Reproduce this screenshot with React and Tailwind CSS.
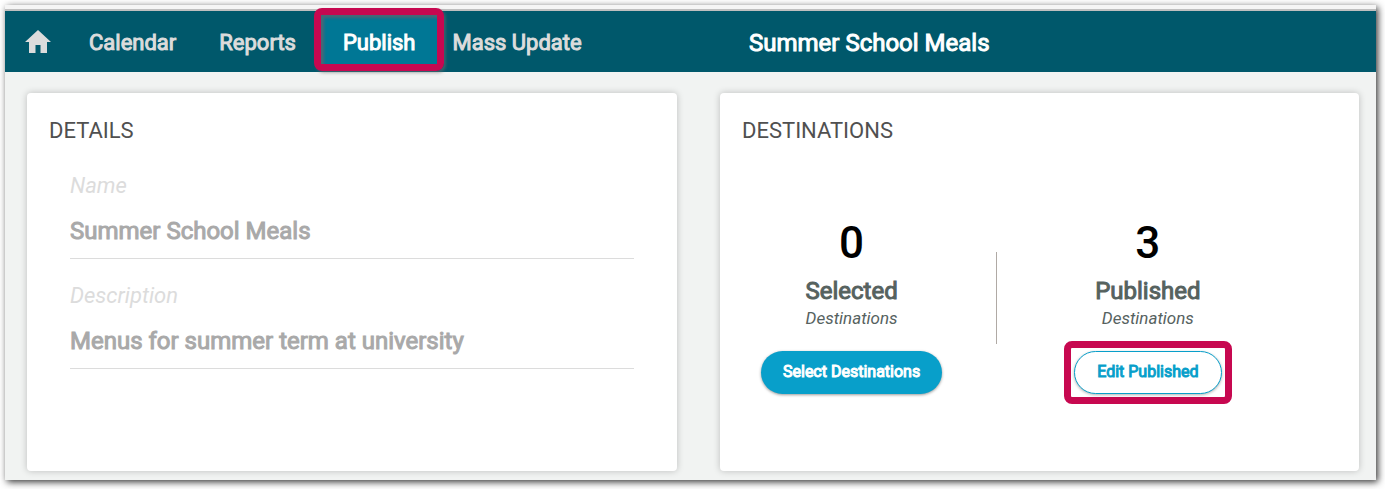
const NAV_LINKS = [
  { label: "Calendar", href: "#calendar" },
  { label: "Reports", href: "#reports" },
];

const HEAVY = "[-webkit-text-stroke:1px_currentColor]";

function HomeIcon() {
  return (
    <svg viewBox="0 0 26 23" className="w-[26px] h-[23px]" fill="currentColor" aria-hidden="true">
      <path d="M13 0 26 12h-4v11h-6.500v-8h-5v8H4V12H0z" />
    </svg>
  );
}

function Field({ id, label, value }) {
  return (
    <div className="flex flex-col">
      <label htmlFor={id} className="text-[22px] leading-[26px] italic text-[#dcdcdc]">
        {label}
      </label>
      <input
        id={id}
        type="text"
        defaultValue={value}
        className={`h-[60px] w-full border-b border-[#dcdcdc] bg-transparent pt-1 text-2xl text-[#a9a9a9] outline-none ${HEAVY}`}
      />
    </div>
  );
}

function Card({ title, children }) {
  return (
    <section className="rounded bg-white px-[22px] pt-6 pb-[102px] shadow-[0_0_7px_rgba(0,0,0,0.22)]">
      <h2 className="text-[22px] leading-7 text-[#505050]">{title}</h2>
      {children}
    </section>
  );
}

function Stat({ count, label, children }) {
  return (
    <div className="flex flex-col items-center">
      <span className="text-[44px] leading-[54px] font-medium text-black">{count}</span>
      <span className={`mt-[6px] text-2xl leading-[30px] text-[#56625f] ${HEAVY}`}>{label}</span>
      <span className="text-[17px] leading-6 italic text-[#56625f]">Destinations</span>
      <div className="flex h-[84px] items-center">{children}</div>
    </div>
  );
}

export default function App() {
  return (
    <div className="bg-white pt-[5px] pr-[9px] pb-[9px] pl-[5px] font-['Roboto',sans-serif]">
      <div className="bg-[#f1f3f2] shadow-[2px_2px_7px_rgba(0,0,0,0.8)]">
        <div className="h-[6px] border-b-2 border-[#bfbfbf] bg-[#f5f5f5]" />

        <header className="grid h-[61px] grid-cols-[650fr_639fr] items-center gap-[43px] bg-[#00586b] pt-0.5 pr-[17px] pl-5">
          <nav className="flex items-center text-[22px] leading-8 whitespace-nowrap text-[#dcdcdc]">
            <a href="#home" aria-label="Home" className="-mt-0.5">
              <HomeIcon />
            </a>
            <div className="flex gap-[43px] pl-[38px]">
              {NAV_LINKS.map((link) => (
                <a key={link.label} href={link.href} className={HEAVY}>
                  {link.label}
                </a>
              ))}
            </div>
            <div className="-mt-5 -mb-3.5 ml-[18px] rounded-lg border-[7px] border-[#c70850] shadow-[2px_2px_3px_rgba(110,110,110,0.5)]">
              <a
                href="#publish"
                className={`flex h-[49px] items-center bg-[#007795] px-[22px] pt-1.5 text-white shadow-[inset_3px_3px_3px_rgba(90,100,110,0.8)] ${HEAVY}`}
              >
                Publish
              </a>
            </div>
            <a href="#mass-update" className={`ml-2 ${HEAVY}`}>
              Mass Update
            </a>
          </nav>
          <h1 className={`pl-[30px] text-2xl leading-8 text-white ${HEAVY}`}>Summer School Meals</h1>
        </header>

        <main className="grid grid-cols-[650fr_639fr] gap-[43px] pt-[21px] pr-[17px] pb-[9px] pl-[22px]">
          <Card title="DETAILS">
            <div className="flex flex-col gap-6 px-[21px] pt-7">
              <Field id="name" label="Name" value="Summer School Meals" />
              <Field id="description" label="Description" value="Menus for summer term at university" />
            </div>
          </Card>

          <Card title="DESTINATIONS">
            <div className="-mb-[102px] flex items-start pt-[71px] pl-[19px]">
              <Stat count={0} label="Selected">
                <button
                  type="button"
                  className={`h-[43px] rounded-full bg-[#089fca] px-[22px] text-base text-white shadow-[0_1px_3px_rgba(0,0,0,0.4)] ${HEAVY}`}
                >
                  Select Destinations
                </button>
              </Stat>
              <div className="mt-9 mr-[67px] ml-[54px] h-[92px] w-px bg-[#b0aaa5]" />
              <Stat count={3} label="Published">
                <div className="rounded-lg border-[7px] border-[#c70850] p-[3px]">
                  <button
                    type="button"
                    className={`h-[43px] rounded-full border border-[#089fca] bg-white px-[22px] text-base text-[#089fca] shadow-[0_1px_3px_rgba(0,0,0,0.3)] ${HEAVY}`}
                  >
                    Edit Published
                  </button>
                </div>
              </Stat>
            </div>
          </Card>
        </main>
      </div>
    </div>
  );
}
